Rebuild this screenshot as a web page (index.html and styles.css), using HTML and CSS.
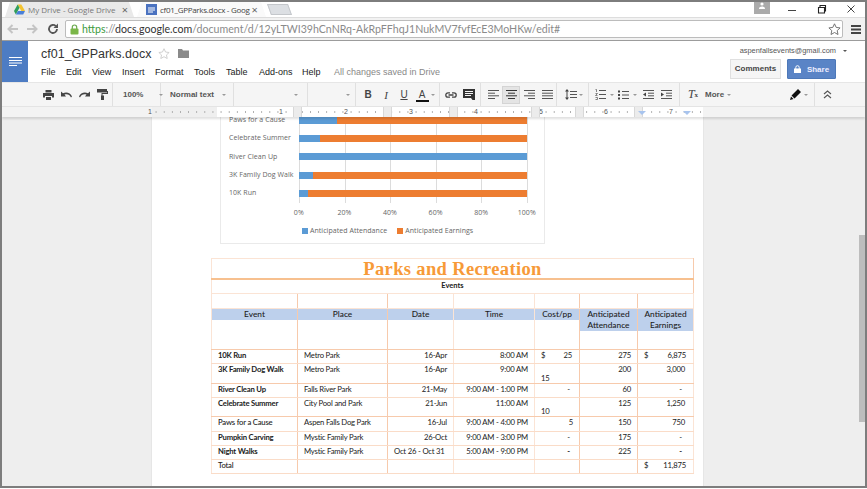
FILE: index.html
```html
<!DOCTYPE html>
<html lang="en">
<head>
  <meta charset="UTF-8">
  <title>cf01_GPParks.docx - Google Docs</title>
  <link rel="stylesheet" href="styles.css">
</head>
<body>
  <div class="window">
    <!-- browser chrome -->
    <div class="tabstrip">
      <div class="tab tab-off">
        <svg class="tab-icon" viewBox="0 0 12 11"><path d="M4 0h4l4 7H8z" fill="#f4c430"/><path d="M4 0l2 3.5L2 11 0 7.2z" fill="#2f9e5b"/><path d="M4.3 7H12l-2 4H2z" fill="#4a80d8"/></svg>
        <span class="tab-title">My Drive - Google Drive</span>
        <span class="tab-x">×</span>
      </div>
      <div class="tab tab-on">
        <svg class="tab-icon" viewBox="0 0 11 11"><rect width="11" height="11" fill="#4a72c0"/><path d="M2 4h7M2 6h7M2 8h5" stroke="#fff"/></svg>
        <span class="tab-title">cf01_GPParks.docx - Goog</span>
        <span class="tab-x">×</span>
      </div>
      <div class="tab-new"></div>
      <div class="winctl">
        <div class="user-badge"><svg width="8" height="7" viewBox="0 0 8 7"><circle cx="4" cy="2" r="1.6" fill="#fff"/><path d="M1 7c0-2 1.5-2.6 3-2.6S7 5 7 7z" fill="#fff"/></svg></div>
        <svg class="ctl ctl-min" width="10" height="10" viewBox="0 0 10 10"><path d="M1 6.5h8" stroke="#444"/></svg>
        <svg class="ctl ctl-max" width="10" height="10" viewBox="0 0 10 10"><path d="M1.5 3.5h6v5.5h-6zM3 3.500V1.500h5.500V7H7.500" fill="none" stroke="#222" stroke-width="1.100"/></svg>
        <svg class="ctl ctl-close" width="10" height="10" viewBox="0 0 10 10"><path d="M1.500 1.500l7 7M8.500 1.500l-7 7" stroke="#444"/></svg>
      </div>
    </div>
    <div class="addressrow">
      <svg class="nav" width="12" height="10" viewBox="0 0 12 10"><path d="M11 5H2M5.500 1L1.500 5l4 4" fill="none" stroke="#c4c4c4" stroke-width="2"/></svg>
      <svg class="nav" width="12" height="10" viewBox="0 0 12 10"><path d="M1 5h9M6.500 1l4 4-4 4" fill="none" stroke="#c4c4c4" stroke-width="2"/></svg>
      <svg class="nav nav-reload" width="12" height="12" viewBox="0 0 12 12"><path d="M10 6a4 4 0 1 1-1.200-2.900" fill="none" stroke="#555" stroke-width="1.800"/><path d="M11 0.500v4.500H6.500z" fill="#555"/></svg>
      <div class="omnibox">
        <svg class="lock" width="9" height="11" viewBox="0 0 9 11"><path d="M2.300 5V3.200a2.200 2.200 0 0 1 4.400 0V5" fill="none" stroke="#6aa84f" stroke-width="1.200"/><rect x="0.500" y="4.500" width="8" height="6" rx="1" fill="#7ab648"/></svg>
        <span class="url"><span class="url-https">https</span><span class="url-sep">://</span><span class="url-host">docs.google.com</span>/document/d/12yLTWI39hCnNRq-AkRpFFhqJ1NukMV7fvfEcE3MoHKw/edit#</span>
        <svg class="omni-star" width="13" height="12" viewBox="0 0 13 12"><path d="M6.500.8l1.700 3.600 3.900.5-2.900 2.700.8 3.900-3.500-2-3.500 2 .8-3.900L.9 4.900l3.900-.5z" fill="none" stroke="#666" stroke-width=".9"/></svg>
      </div>
      <svg class="hamburger" width="10" height="9" viewBox="0 0 10 9"><path d="M0 1h10M0 4.500h10M0 8h10" stroke="#444" stroke-width="1.800"/></svg>
    </div>

    <!-- docs header -->
    <header class="docs-head">
      <div class="docs-home"><svg width="13" height="9" viewBox="0 0 13 9"><path d="M0 .5h13M0 3.500h13M0 6h13M0 8.500h8" stroke="#fff"/></svg></div>
      <div class="docs-title-area">
        <div class="docs-title-row">
          <span class="docs-title">cf01_GPParks.docx</span>
          <svg class="title-star" width="12" height="11" viewBox="0 0 13 12"><path d="M6.500.8l1.700 3.600 3.900.5-2.900 2.700.8 3.900-3.500-2-3.500 2 .8-3.900L.9 4.900l3.900-.5z" fill="none" stroke="#ccc"/></svg>
          <svg class="title-folder" width="11" height="9" viewBox="0 0 11 9"><path d="M0 0h4l1 1.500h6V9H0z" fill="#8a8a8a"/></svg>
        </div>
        <nav class="menubar">
          <span class="m-file">File</span><span class="m-edit">Edit</span><span class="m-view">View</span><span class="m-insert">Insert</span><span class="m-format">Format</span><span class="m-tools">Tools</span><span class="m-table">Table</span><span class="m-addons">Add-ons</span><span class="m-help">Help</span><span class="saved">All changes saved in Drive</span>
        </nav>
      </div>
      <div class="docs-account">
        <div class="email">aspenfallsevents@gmail.com <i class="caret caret-dark"></i></div>
        <div class="head-buttons">
          <div class="btn-comments">Comments</div>
          <div class="btn-share"><svg width="7" height="8" viewBox="0 0 7 8"><path d="M1.800 4V2.400a1.700 1.700 0 0 1 3.400 0V4" fill="none" stroke="#fff"/><rect y="3.500" width="7" height="4.500" fill="#fff"/></svg>Share</div>
        </div>
      </div>
    </header>

    <!-- formatting toolbar -->
    <div class="toolbar">
      <div class="tg tg-history">
        <span class="ti"><svg width="11" height="10" viewBox="0 0 11 10"><path d="M2.500 0h6v2.500h-6zM0 3h11v4.500H9V6H2v1.500H0zM3 7h5v3H3z" fill="#444"/></svg></span>
        <span class="ti"><svg width="11" height="7" viewBox="0 0 11 7"><path d="M10 6.500C9 3.500 6 2.500 3.500 3.500L5 5.500H0V.5l2 1.800C5.500.5 9.500 2 11 5.500z" fill="#444"/></svg></span>
        <span class="ti"><svg width="11" height="7" viewBox="0 0 11 7"><path d="M1 6.500C2 3.500 5 2.500 7.500 3.500L6 5.500h5V.5L9 2.300C5.500.5 1.500 2 0 5.500z" fill="#444"/></svg></span>
        <span class="ti"><svg width="11" height="11" viewBox="0 0 11 11"><path d="M0 0h10v3.500H0zM10 2h1v3H5.500v1.500H7V11H4V6.500h.5V4H10z" fill="#444"/></svg></span>
      </div>
      <div class="tg tg-zoom"><span class="tt">100%</span><i class="caret"></i></div>
      <div class="tg tg-style"><span class="tt">Normal text</span><i class="caret"></i></div>
      <div class="tg tg-font"><i class="caret"></i></div>
      <div class="tg tg-size"><i class="caret"></i></div>
      <div class="tg tg-format">
        <span class="ti ti-b">B</span><span class="ti ti-i">I</span><span class="ti ti-u">U</span><span class="ti ti-a">A</span><i class="caret"></i>
      </div>
      <div class="tg tg-insert">
        <span class="ti"><svg width="12" height="6" viewBox="0 0 12 6"><path d="M5 .8H3a2.200 2.200 0 0 0 0 4.400h2M7 .8h2a2.200 2.200 0 0 1 0 4.400H7M3.500 3h5" fill="none" stroke="#444" stroke-width="1.300"/></svg></span>
        <span class="ti"><svg width="12" height="11" viewBox="0 0 12 11"><path d="M0 0h12v11H9.500L8 9H0z" fill="#333"/><path d="M2 2.500h8M2 4.500h8M2 6.500h6" stroke="#f5f5f5"/></svg></span>
      </div>
      <div class="tg tg-align">
        <span class="ti"><svg width="11" height="9" viewBox="0 0 11 9"><path d="M0 .5h11M0 3.200h7M0 5.800h11M0 8.500h7" stroke="#555"/></svg></span>
        <span class="ti ti-active"><svg width="11" height="9" viewBox="0 0 11 9"><path d="M0 .5h11M2 3.200h7M0 5.800h11M2 8.500h7" stroke="#333"/></svg></span>
        <span class="ti"><svg width="11" height="9" viewBox="0 0 11 9"><path d="M0 .5h11M4 3.200h7M0 5.800h11M4 8.500h7" stroke="#555"/></svg></span>
        <span class="ti"><svg width="11" height="9" viewBox="0 0 11 9"><path d="M0 .5h11M0 3.200h11M0 5.800h11M0 8.500h11" stroke="#555"/></svg></span>
      </div>
      <div class="tg tg-spacing">
        <span class="ti"><svg width="12" height="11" viewBox="0 0 12 11"><path d="M2 1v9" stroke="#444"/><path d="M2 0l2 2.500H0zM2 11l2-2.500H0z" fill="#444"/><path d="M5 2.500h7M5 5.500h7M5 8.500h7" stroke="#555"/></svg></span><i class="caret"></i>
      </div>
      <div class="tg tg-lists">
        <span class="ti"><svg width="11" height="11" viewBox="0 0 11 11"><path d="M4 1.500h7M4 5.500h7M4 9.500h7" stroke="#555"/><path d="M.5.500h1v2.500M.5 4.500h2l-2 2h2M.5 8.500h2v2h-2" fill="none" stroke="#555" stroke-width=".7"/></svg></span><i class="caret"></i>
        <span class="ti ti-bul"><svg width="11" height="10" viewBox="0 0 11 10"><path d="M4 1.500h7M4 5h7M4 8.500h7" stroke="#555"/><path d="M0 .5h2v2H0zM0 4h2v2H0zM0 7.500h2v2H0z" fill="#444"/></svg></span><i class="caret"></i>
        <span class="ti ti-out"><svg width="11" height="9" viewBox="0 0 11 9"><path d="M0 .5h11M5 3.200h6M5 5.800h6M0 8.500h11" stroke="#555"/><path d="M3 2.500v4L0 4.500z" fill="#444"/></svg></span>
        <span class="ti"><svg width="11" height="9" viewBox="0 0 11 9"><path d="M0 .5h11M5 3.200h6M5 5.800h6M0 8.500h11" stroke="#555"/><path d="M0 2.500v4l3-2z" fill="#444"/></svg></span>
      </div>
      <div class="tg tg-clear">
        <span class="ti ti-tx">T<sub>x</sub></span><span class="tt tt-more">More</span><i class="caret"></i>
      </div>
      <div class="tg tg-pen">
        <span class="ti"><svg width="11" height="11" viewBox="0 0 11 11"><path d="M8 0l3 3-6.500 6.500-3-3zM1 7.500l2.500 2.500L0 11z" fill="#111"/></svg></span><i class="caret"></i>
      </div>
      <div class="tg tg-collapse">
        <svg width="9" height="9" viewBox="0 0 9 9"><path d="M1 4l3.500-3L8 4M1 8l3.500-3L8 8" fill="none" stroke="#555" stroke-width="1.100"/></svg>
      </div>
    </div>

    <!-- ruler -->
    <div class="ruler">
      <div class="ruler-track">
        <div class="ruler-marks">
          <span>1</span><span class="blank"></span><span>1</span><span>2</span><span>3</span><span>4</span><span>5</span><span>6</span><span>7</span>
        </div>
        <i class="grip" style="left:141px"></i>
        <i class="grip" style="left:231px"></i>
        <i class="grip" style="left:297px"></i>
        <i class="grip" style="left:379px"></i>
        <i class="grip" style="left:423px"></i>
        <i class="grip" style="left:482px"></i>
        <i class="indent-mark" style="left:486px"></i>
        <i class="indent-mark" style="left:531px"></i>
      </div>
    </div>

    <!-- document -->
    <main class="canvas">
      <div class="page">
        <section class="chart">
          <div class="plot-wrap">
            <div class="cat-labels">
              <div>Paws for a Cause</div>
              <div>Celebrate Summer</div>
              <div>River Clean Up</div>
              <div>3K Family Dog Walk</div>
              <div>10K Run</div>
            </div>
            <div class="plot">
              <div class="bar"><i class="b-att" style="width:16.7%"></i><i class="b-earn"></i></div>
              <div class="bar"><i class="b-att" style="width:9%"></i><i class="b-earn"></i></div>
              <div class="bar"><i class="b-att" style="width:100%"></i></div>
              <div class="bar"><i class="b-att" style="width:6.2%"></i><i class="b-earn"></i></div>
              <div class="bar"><i class="b-att" style="width:3.800%"></i><i class="b-earn"></i></div>
            </div>
          </div>
          <div class="axis"><span>0%</span><span>20%</span><span>40%</span><span>60%</span><span>80%</span><span>100%</span></div>
          <div class="legend">
            <span class="lg"><i class="b-att"></i>Anticipated Attendance</span>
            <span class="lg"><i class="b-earn"></i>Anticipated Earnings</span>
          </div>
        </section>

        <table class="sheet">
          <colgroup>
            <col class="c-event"><col class="c-place"><col class="c-date"><col class="c-time"><col class="c-cost"><col class="c-att"><col class="c-earn">
          </colgroup>
          <tr class="r-title"><td colspan="7">Parks and Recreation</td></tr>
          <tr class="r-sub"><td colspan="7">Events</td></tr>
          <tr class="r-blank"><td></td><td></td><td></td><td></td><td></td><td></td><td></td></tr>
          <tr class="r-head">
            <td><div class="hd">Event</div></td>
            <td><div class="hd">Place</div></td>
            <td><div class="hd">Date</div></td>
            <td><div class="hd">Time</div></td>
            <td><div class="hd">Cost/pp</div></td>
            <td><div class="hd">Anticipated Attendance</div></td>
            <td><div class="hd">Anticipated Earnings</div></td>
          </tr>
          <tr class="r-data">
            <td class="name">10K Run</td><td>Metro Park</td><td class="num">16-Apr</td><td class="num">8:00 AM</td>
            <td class="acct"><div class="money"><span>$</span><span>25</span></div></td><td class="num">275</td>
            <td class="acct"><div class="money"><span>$</span><span>6,875</span></div></td>
          </tr>
          <tr class="r-tall">
            <td class="name">3K Family Dog Walk</td><td>Metro Park</td><td class="num">16-Apr</td><td class="num">9:00 AM</td>
            <td class="wrapped">15</td><td class="num">200</td><td class="num earn">3,000</td>
          </tr>
          <tr class="r-data">
            <td class="name">River Clean Up</td><td>Falls River Park</td><td class="num">21-May</td><td class="num">9:00 AM - 1:00 PM</td>
            <td class="num dash">-</td><td class="num">60</td><td class="num earn dash">-</td>
          </tr>
          <tr class="r-tall r-short">
            <td class="name">Celebrate Summer</td><td>City Pool and Park</td><td class="num">21-Jun</td><td class="num">11:00 AM</td>
            <td class="wrapped">10</td><td class="num">125</td><td class="num earn">1,250</td>
          </tr>
          <tr class="r-data r-paws">
            <td class="plain">Paws for a Cause</td><td>Aspen Falls Dog Park</td><td class="num">16-Jul</td><td class="num">9:00 AM - 4:00 PM</td>
            <td class="num cost-5">5</td><td class="num">150</td><td class="num earn">750</td>
          </tr>
          <tr class="r-data">
            <td class="name">Pumpkin Carving</td><td>Mystic Family Park</td><td class="num">26-Oct</td><td class="num">9:00 AM - 3:00 PM</td>
            <td class="num dash">-</td><td class="num">175</td><td class="num earn dash">-</td>
          </tr>
          <tr class="r-data">
            <td class="name">Night Walks</td><td>Mystic Family Park</td><td>Oct 26 - Oct 31</td><td class="num">5:00 AM - 9:00 PM</td>
            <td class="num dash strong">-</td><td class="num">225</td><td class="num earn dash strong">-</td>
          </tr>
          <tr class="r-data">
            <td class="plain">Total</td><td></td><td></td><td></td><td></td><td></td>
            <td class="acct"><div class="money"><span>$</span><span>11,875</span></div></td>
          </tr>
        </table>
      </div>
      <div class="scrollthumb"></div>
    </main>
  </div>
</body>
</html>
```

FILE: styles.css
```css
html, body {
  margin: 0;
  padding: 0;
  background: #fff;
}
body {
  width: 867px;
  height: 489px;
  overflow: hidden;
  font-family: "Liberation Sans", Arial, sans-serif;
}
.window {
  box-sizing: border-box;
  width: 867px;
  height: 488px;
  border: 2px solid #7d7d7d;
  display: flex;
  flex-direction: column;
  overflow: hidden;
}

/* tabs */
.tabstrip {
  height: 15px;
  flex: none;
  display: flex;
  background: #fff;
  padding-left: 3px;
  font-family: "Open Sans", sans-serif;
  font-size: 8px;
}
.tab {
  width: 129px;
  height: 15px;
  box-sizing: border-box;
  display: flex;
  align-items: center;
  padding: 0 6px 0 9px;
  clip-path: polygon(0 100%, 5px 0, 124px 0, 129px 100%);
}
.tab-off {
  background: #e9e9e9;
  color: #777;
}
.tab-on {
  background: #fafafa;
  color: #444;
  margin-left: 3px;
  padding-right: 10px;
}
.tab-on .tab-title {
  letter-spacing: -0.3px;
}
.tab-icon {
  width: 11px;
  height: 11px;
  margin-right: 3px;
  flex: none;
}
.tab-title {
  flex: 1;
  white-space: nowrap;
}
.tab-x {
  font-size: 11px;
  line-height: 11px;
  color: #666;
  margin-left: 2px;
}
.tab-new {
  width: 21px;
  height: 11px;
  margin: 2px 0 0 3px;
  background: #dcdfe3;
  border: 1px solid #c4c7cb;
  box-sizing: border-box;
  transform: skewX(20deg);
}
.winctl {
  margin-left: auto;
  display: flex;
  align-items: flex-start;
}
.user-badge {
  width: 16px;
  height: 12px;
  background: #aaa;
  display: flex;
  justify-content: center;
  margin-right: 17px;
}
.ctl {
  margin-top: 2px;
}
.ctl-min { margin-right: 20px; }
.ctl-max { margin-right: 19px; }
.ctl-close { margin-right: 9px; }

/* address bar */
.addressrow {
  height: 24px;
  flex: none;
  box-sizing: border-box;
  background: #f2f2f2;
  border-top: 1px solid #ddd;
  border-bottom: 1px solid #9c9c9c;
  display: flex;
  align-items: center;
  padding-left: 5px;
}
.nav {
  margin-right: 7px;
  flex: none;
}
.nav-reload {
  margin: 0 6px 0 2px;
}
.omnibox {
  width: 778px;
  height: 18px;
  box-sizing: border-box;
  background: #fff;
  border: 1px solid #bcbcbc;
  border-radius: 2px;
  display: flex;
  align-items: center;
  padding-left: 4px;
  flex: none;
}
.lock {
  margin-right: 3px;
}
.url {
  font-family: Lato, sans-serif;
  font-size: 10.6px;
  color: #8a8a8a;
  white-space: nowrap;
}
.url-https { color: #3c9a3c; }
.url-sep { color: #8a8a8a; }
.url-host { color: #333; }
.omni-star {
  margin-left: auto;
  margin-right: 1px;
}
.hamburger {
  margin-left: 8px;
}

/* docs header */
.docs-head {
  height: 41px;
  flex: none;
  background: #fff;
  display: flex;
}
.docs-home {
  width: 26px;
  background: #4d7cc3;
  display: flex;
  align-items: center;
  justify-content: center;
}
.docs-title-area {
  margin-left: 13px;
  width: 580px;
}
.docs-title-row {
  height: 22px;
  display: flex;
  align-items: center;
  padding-top: 3px;
  box-sizing: border-box;
}
.docs-title {
  font-size: 12.5px;
  color: #333;
  width: 117px;
  white-space: nowrap;
}
.title-star {
  margin-right: 8px;
}
.menubar {
  display: flex;
  font-size: 9px;
  color: #222;
  line-height: 14px;
  padding-top: 2px;
}
.menubar span { flex: none; }
.m-file { width: 25px; }
.m-edit { width: 26px; }
.m-view { width: 30px; }
.m-insert { width: 33px; }
.m-format { width: 39px; }
.m-tools { width: 32px; }
.m-table { width: 33px; }
.m-addons { width: 43px; }
.m-help { width: 32px; }
.saved { color: #888; }
.docs-account {
  margin-left: auto;
  width: 136px;
  padding-right: 29px;
  display: flex;
  flex-direction: column;
  align-items: flex-end;
  box-sizing: border-box;
}
.email {
  font-size: 7.4px;
  color: #555;
  white-space: nowrap;
  line-height: 10px;
  margin-top: 5px;
  margin-right: -11px;
}
.head-buttons {
  display: flex;
  gap: 6px;
  margin-top: 3px;
}
.btn-comments {
  width: 51px;
  height: 20px;
  box-sizing: border-box;
  background: #f5f5f5;
  border: 1px solid #e0e0e0;
  font-size: 8px;
  font-weight: bold;
  color: #444;
  line-height: 18px;
  text-align: center;
}
.btn-share {
  width: 49px;
  height: 20px;
  box-sizing: border-box;
  background: #5a84c6;
  border: 1px solid #4d78b8;
  border-radius: 1px;
  font-size: 8px;
  font-weight: bold;
  color: #eef;
  display: flex;
  align-items: center;
  justify-content: center;
  gap: 6px;
}
.caret {
  display: inline-block;
  width: 0;
  height: 0;
  border: 2px solid transparent;
  border-top: 2px solid #999;
  border-bottom: 0;
  flex: none;
}
.caret-dark {
  border-top-color: #555;
  margin-left: 5px;
  vertical-align: middle;
}

/* toolbar */
.toolbar {
  height: 25px;
  flex: none;
  box-sizing: border-box;
  background: #f5f5f5;
  border-top: 1px solid #e6e6e6;
  border-bottom: 1px solid #e4e4e4;
  padding-left: 37px;
  display: flex;
  align-items: stretch;
  color: #444;
  font-size: 8px;
}
.tg {
  display: flex;
  align-items: center;
  box-sizing: border-box;
  border-right: 1px solid #e0e0e0;
  flex: none;
}
.ti {
  width: 18px;
  height: 18px;
  display: flex;
  align-items: center;
  justify-content: center;
  flex: none;
}
.tt {
  font-weight: bold;
  white-space: nowrap;
  color: #555;
}
.tg-history { width: 74px; }
.tg-zoom { width: 48px; padding-left: 10px; }
.tg-zoom .caret { margin-left: 16px; }
.tg-style { width: 73px; padding-left: 9px; }
.tg-style .caret { margin-left: 8px; }
.tg-font { width: 74px; padding-left: 60px; }
.tg-size { width: 48px; padding-left: 38px; }
.tg-format { width: 84px; padding-left: 3px; }
.tg-format .caret { margin-left: 0; }
.tg-insert { width: 41px; padding-left: 2px; }
.tg-align { width: 76px; padding-left: 3px; }
.tg-spacing { width: 32px; padding-left: 5px; }
.tg-spacing .caret { margin-left: -1px; }
.tg-lists { width: 91px; padding-left: 2px; }
.tg-lists .caret { margin-left: 1px; }
.ti-out { margin-left: 2px; }
.tg-clear { width: 106px; padding-left: 4px; border-right: 0; }
.tt-more { margin-left: 3px; }
.tg-clear .caret { margin-left: 3px; }
.tg-pen { width: 29px; }
.tg-collapse { border: 0; padding-left: 8px; }
.ti-b { font-weight: bold; font-size: 10px; color: #444; }
.ti-i { font-style: italic; font-family: "Liberation Serif", serif; font-size: 11px; }
.ti-u { text-decoration: underline; font-size: 10px; }
.ti-a {
  font-size: 10px;
  background: linear-gradient(#111, #111) no-repeat 50% 14px / 13px 2px;
}
.ti-active {
  background: #e4e4e4;
  border: 1px solid #d4d4d4;
  box-sizing: border-box;
}
.ti-tx {
  font-family: "Liberation Serif", serif;
  font-style: italic;
  font-size: 12px;
}
.ti-tx sub {
  font-size: 7px;
  font-style: normal;
  font-weight: bold;
}

/* ruler */
.ruler {
  height: 10px;
  flex: none;
  background: #f3f3f3;
  padding-left: 150px;
  box-shadow: 0 2px 2px rgba(0, 0, 0, 0.12);
  position: relative;
  z-index: 2;
}
.ruler-track {
  width: 551px;
  height: 10px;
  position: relative;
  background:
    radial-gradient(circle, #aaa 0 .6px, transparent .8px) 0 0 / 8.125px 10px,
    linear-gradient(to right, #efefef 65px, #fff 65px);
}
.ruler-marks {
  display: flex;
  font-size: 7px;
  line-height: 10px;
  color: #555;
  margin-left: -4px;
}
.ruler-marks span {
  width: 65px;
  flex: none;
}
.ruler-marks .blank { width: 66px; }
.grip {
  position: absolute;
  top: 0;
  width: 9px;
  height: 10px;
  box-sizing: border-box;
  background: #ececec;
  border-left: 1px solid #d8d8d8;
  border-right: 1px solid #d8d8d8;
}
.indent-mark {
  position: absolute;
  top: 4px;
  width: 0;
  height: 0;
  border: 4px solid transparent;
  border-top: 4px solid #a8c4ee;
  border-bottom: 0;
}

/* document area */
.canvas {
  flex: 1;
  min-height: 0;
  background: #eeeeee;
  position: relative;
  overflow: hidden;
  padding-left: 150px;
}
.page {
  width: 551px;
  min-height: 380px;
  background: #fff;
  box-shadow: 0 0 1px rgba(0, 0, 0, 0.2);
  padding-bottom: 20px;
}
.scrollthumb {
  position: absolute;
  right: 0;
  top: 118px;
  width: 6px;
  height: 187px;
  background: #bdbdbd;
}

/* chart */
.chart {
  width: 325px;
  height: 133px;
  margin: -6px 0 0 68px;
  box-sizing: border-box;
  border: 1px solid #eaeaea;
  border-top: 0;
  font-family: "Open Sans", sans-serif;
  font-size: 7px;
  letter-spacing: 0.05px;
  color: #666;
}
.plot-wrap {
  display: flex;
  height: 92px;
}
.cat-labels {
  width: 78px;
  flex: none;
  padding-left: 8px;
  box-sizing: border-box;
  white-space: nowrap;
}
.cat-labels div {
  height: 18.3px;
  line-height: 18.3px;
}
.plot {
  width: 228px;
  height: 92px;
  background: repeating-linear-gradient(to right, #dcdcdc 0 1px, transparent 1px 45.6px);
  border-right: 1px solid #dcdcdc;
}
.bar {
  height: 18.3px;
  display: flex;
  align-items: center;
}
.bar i {
  display: block;
  height: 7px;
}
.b-att { background: #5b9bd5; flex: none; }
.b-earn { background: #ed7d31; flex: 1; }
.axis {
  display: flex;
  margin: 4px 0 0 55px;
  line-height: 11px;
}
.axis span {
  width: 45.6px;
  flex: none;
  text-align: center;
}
.legend {
  display: flex;
  gap: 10px;
  margin: 7px 0 0 81px;
  line-height: 11px;
}
.lg {
  display: flex;
  align-items: center;
  gap: 2px;
}
.lg i {
  display: block;
  flex: none;
  width: 6px;
  height: 6px;
}

/* spreadsheet table */
.sheet {
  border-collapse: collapse;
  table-layout: fixed;
  width: 482px;
  margin: 14px 0 0 59px;
  font-family: Lato, sans-serif;
  font-size: 7.7px;
  letter-spacing: -0.2px;
  color: #222;
}
.sheet td {
  border: 1px solid #fbe4d5;
  padding: 0 6px;
  vertical-align: top;
  line-height: 10px;
  white-space: nowrap;
}
.c-event { width: 86px; }
.c-place { width: 90px; }
.c-date { width: 66px; }
.c-time { width: 81px; }
.c-cost { width: 45px; }
.c-att { width: 58px; }
.c-earn { width: 56px; }
.sheet td:nth-child(1),
.sheet td:nth-child(2),
.sheet td:nth-child(5),
.sheet td:nth-child(6) {
  border-right-color: #f7caac;
}
.sheet .r-title td {
  height: 18px;
  padding-top: 1px;
  text-align: center;
  font-family: "Liberation Serif", serif;
  font-weight: bold;
  font-size: 18.5px;
  letter-spacing: 0.35px;
  line-height: 18px;
  color: #f79a38;
  border-bottom: 2px solid #f7c08f;
}
.sheet .r-sub td {
  height: 13px;
  text-align: center;
  font-weight: bold;
  font-size: 7.5px;
  letter-spacing: 0;
  line-height: 12px;
}
.r-blank td { height: 14px; }
.sheet .r-head td {
  height: 40px;
  padding: 0;
  font-size: 8.3px;
  letter-spacing: 0;
  font-weight: 500;
  text-align: center;
  white-space: normal;
  line-height: 11px;
  border-bottom-color: #f7caac;
}
.hd {
  background: #bdd0ec;
}
.r-data td { height: 13px; border-bottom-color: #fadcc8; }
.r-tall td { height: 19px; border-bottom-color: #f7caac; }
.r-short td { height: 18px; }
.r-paws td { height: 14px; }
.name { font-weight: bold; }
.plain { font-weight: 500; }
.num { text-align: right; }
.sheet td.earn { padding-right: 8px; }
.sheet td.dash { padding-right: 9px; }
.sheet td.earn.dash { padding-right: 11px; }
.strong { font-weight: bold; }
.sheet td.wrapped { vertical-align: bottom; line-height: 9px; }
.money {
  display: flex;
  justify-content: space-between;
  padding-right: 1px;
}
```
